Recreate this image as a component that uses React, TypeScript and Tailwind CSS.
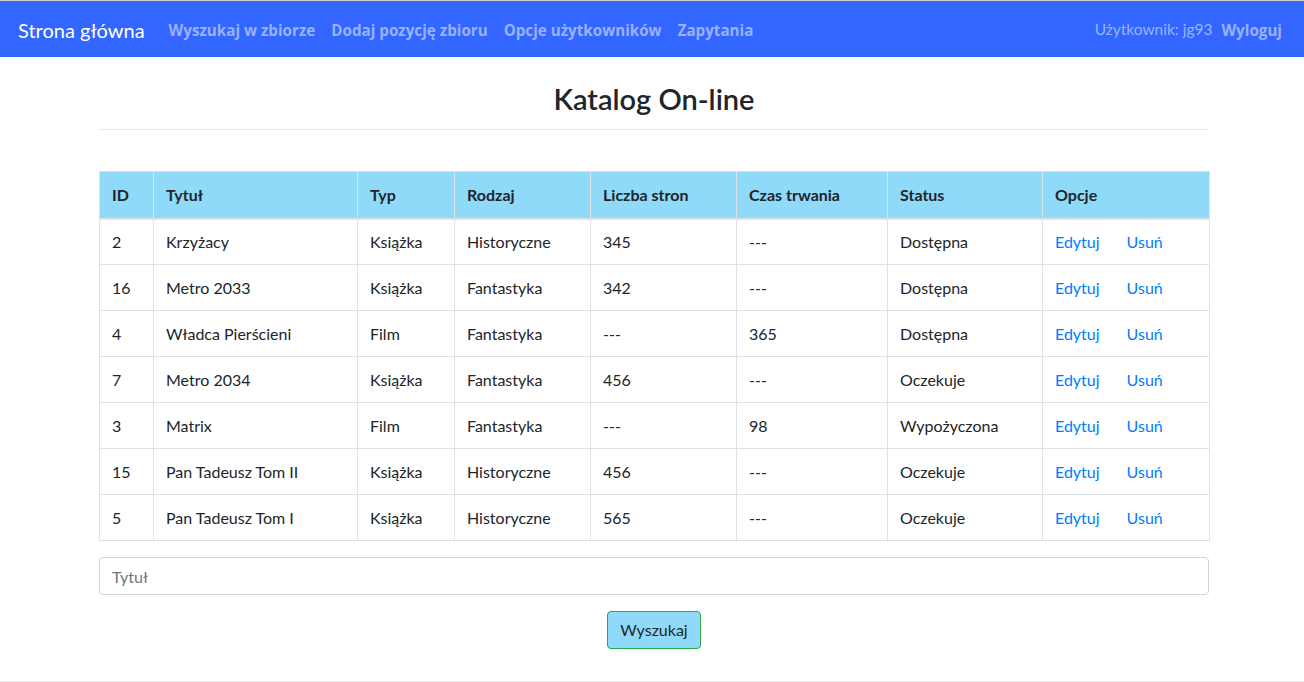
const rows = [
  { id: '2', title: 'Krzyżacy', type: 'Książka', genre: 'Historyczne', pages: '345', time: '---', status: 'Dostępna' },
  { id: '16', title: 'Metro 2033', type: 'Książka', genre: 'Fantastyka', pages: '342', time: '---', status: 'Dostępna' },
  { id: '4', title: 'Władca Pierścieni', type: 'Film', genre: 'Fantastyka', pages: '---', time: '365', status: 'Dostępna' },
  { id: '7', title: 'Metro 2034', type: 'Książka', genre: 'Fantastyka', pages: '456', time: '---', status: 'Oczekuje' },
  { id: '3', title: 'Matrix', type: 'Film', genre: 'Fantastyka', pages: '---', time: '98', status: 'Wypożyczona' },
  { id: '15', title: 'Pan Tadeusz Tom II', type: 'Książka', genre: 'Historyczne', pages: '456', time: '---', status: 'Oczekuje' },
  { id: '5', title: 'Pan Tadeusz Tom I', type: 'Książka', genre: 'Historyczne', pages: '565', time: '---', status: 'Oczekuje' },
]

const headers = ['ID', 'Tytuł', 'Typ', 'Rodzaj', 'Liczba stron', 'Czas trwania', 'Status', 'Opcje']
const widths = ['w-[54px]', 'w-[204px]', 'w-[97px]', 'w-[136px]', 'w-[146px]', 'w-[151px]', 'w-[155px]', 'w-[167px]']

export default function App() {
  return (
    <div className="min-h-[682px] bg-white text-[#212529] font-['Segoe_UI',Lato,sans-serif]">
      {/* Navbar */}
      <nav className="h-[57px] flex items-center justify-between bg-[#3366ff] border-t border-[#d0d0d0] pt-[2px] pl-[18px] pr-[22px]">
        <div className="flex items-center">
          <span className="text-white text-[20px] mr-[16px]">Strona główna</span>
          <div className="flex items-center font-bold text-[15.2px] text-[#99b2ff] font-['Open_Sans',sans-serif]">
            <a className="px-[8px]">Wyszukaj w zbiorze</a>
            <a className="px-[8px]">Dodaj pozycję zbioru</a>
            <a className="px-[8px]">Opcje użytkowników</a>
            <a className="px-[8px]">Zapytania</a>
          </div>
        </div>
        <div className="flex items-center text-[15.5px] text-[#99b2ff]">
          <span className="px-[8px]">Użytkownik: jg93</span>
          <a className="pl-[1px] font-bold font-['Open_Sans',sans-serif] text-[15.2px]">Wyloguj</a>
        </div>
      </nav>

      <div className="pl-[99px] pr-[95px]">
        <h2 className="text-center text-[29px] font-semibold leading-[38px] mt-[23px] mb-[11px]">Katalog On-line</h2>
        <hr className="border-t border-[#e6e6e6] mb-[41px]" />

        <table className="w-full border-collapse text-[16px] table-fixed">
          <thead>
            <tr className="bg-[#8fdaf8]">
              {headers.map((h, i) => (
                <th
                  key={h}
                  className={`${widths[i]} h-[47px] px-[12px] text-left font-bold border border-[#dee2e6] border-b-2`}
                >
                  {h}
                </th>
              ))}
            </tr>
          </thead>
          <tbody>
            {rows.map((r) => (
              <tr key={r.id}>
                <td className="h-[46px] px-[12px] border border-[#dee2e6]">{r.id}</td>
                <td className="px-[12px] border border-[#dee2e6]">{r.title}</td>
                <td className="px-[12px] border border-[#dee2e6]">{r.type}</td>
                <td className="px-[12px] border border-[#dee2e6]">{r.genre}</td>
                <td className="px-[12px] border border-[#dee2e6]">{r.pages}</td>
                <td className="px-[12px] border border-[#dee2e6]">{r.time}</td>
                <td className="px-[12px] border border-[#dee2e6]">{r.status}</td>
                <td className="px-[12px] border border-[#dee2e6]">
                  <div className="flex gap-[27px] text-[#007bff]">
                    <a>Edytuj</a>
                    <a>Usuń</a>
                  </div>
                </td>
              </tr>
            ))}
          </tbody>
        </table>

        <input
          placeholder="Tytuł"
          className="mt-[16px] w-full h-[38px] px-[12px] text-[16px] border border-[#ced4da] rounded-[4px] placeholder-[#6c757d] outline-none"
        />

        <div className="flex justify-center mt-[16px] pb-[32px]">
          <button className="h-[38px] px-[12px] bg-[#8fdaf8] border border-[#28a745] rounded-[4px] text-[16px] text-[#212529]">
            Wyszukaj
          </button>
        </div>
      </div>
      <div className="border-t border-[#eeeeee]" />
    </div>
  )
}
